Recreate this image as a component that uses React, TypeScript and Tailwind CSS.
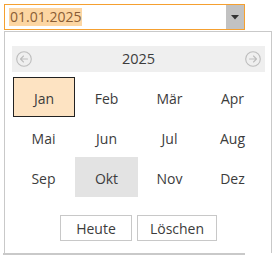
import React from "react";

const months = ["Jan","Feb","Mär","Apr","Mai","Jun","Jul","Aug","Sep","Okt","Nov","Dez"];

function CircleArrow({ dir }: { dir: "left" | "right" }) {
  return (
    <svg width="16" height="16" viewBox="0 0 16 16" fill="none" stroke="#bdbdbd" strokeWidth="1.1">
      <circle cx="8" cy="8" r="7.3" />
      {dir === "left" ? (
        <path d="M11.5 8H4.5M7.5 5L4.5 8L7.5 11" strokeLinecap="round" strokeLinejoin="round" />
      ) : (
        <path d="M4.5 8H11.5M8.5 5L11.5 8L8.5 11" strokeLinecap="round" strokeLinejoin="round" />
      )}
    </svg>
  );
}

export default function App() {
  return (
    <div className="w-[275px] h-[257px] bg-white relative" style={{ fontFamily: '"Open Sans", "Noto Sans", sans-serif' }}>
      <div className="pt-[4px] pl-[4px]">
        <div className="w-[241px] h-[26px] border border-[#f5a030] flex items-stretch">
          <div className="flex-1 flex items-center pl-[4px]">
            <span className="bg-[#fdd6a2] text-[#8a5d35] text-[14px] leading-[18px] px-[1px]">01.01.2025</span>
          </div>
          <div className="w-[18px] bg-[#c2c2c2] flex items-center justify-center">
            <svg width="8" height="5" viewBox="0 0 8 5"><path d="M0 0H8L4 4.5Z" fill="#333" /></svg>
          </div>
        </div>
      </div>
      <div className="ml-[4px] mt-[1px] w-[268px] h-[222px] border-l border-r border-t border-[#c9c9c9] relative">
        <div className="pt-[14px] pl-[7px] pr-[6px]">
          <div className="h-[26px] bg-[#efefef] flex items-center justify-between px-[4px]">
            <CircleArrow dir="left" />
            <span className="text-[14.5px] text-[#3c3c3c]">2025</span>
            <CircleArrow dir="right" />
          </div>
        </div>
        <div className="ml-[7px] mt-[5px] grid grid-cols-[repeat(4,63px)] grid-rows-[repeat(3,40px)]">
          {months.map((m, i) => (
            <div
              key={m}
              className={
                "flex items-center justify-center pt-[2px] text-[14px] text-[#3c3c3c] " +
                (i === 0 ? "bg-[#fde3c2] border border-[#222] ml-[1px]" : i === 9 ? "bg-[#e3e3e3]" : "")
              }
            >
              {m}
            </div>
          ))}
        </div>
        <div className="flex justify-center gap-[5px] mt-[18px] pl-[1px]">
          <button className="w-[72px] h-[26px] border border-[#c8c8c8] bg-white text-[14px] text-[#3c3c3c]">Heute</button>
          <button className="w-[80px] h-[26px] border border-[#c8c8c8] bg-white text-[14px] text-[#3c3c3c]">Löschen</button>
        </div>
      </div>
      <div className="ml-[3px] w-[242px] h-[2px] bg-[#c9c9c9]" />
    </div>
  );
}
